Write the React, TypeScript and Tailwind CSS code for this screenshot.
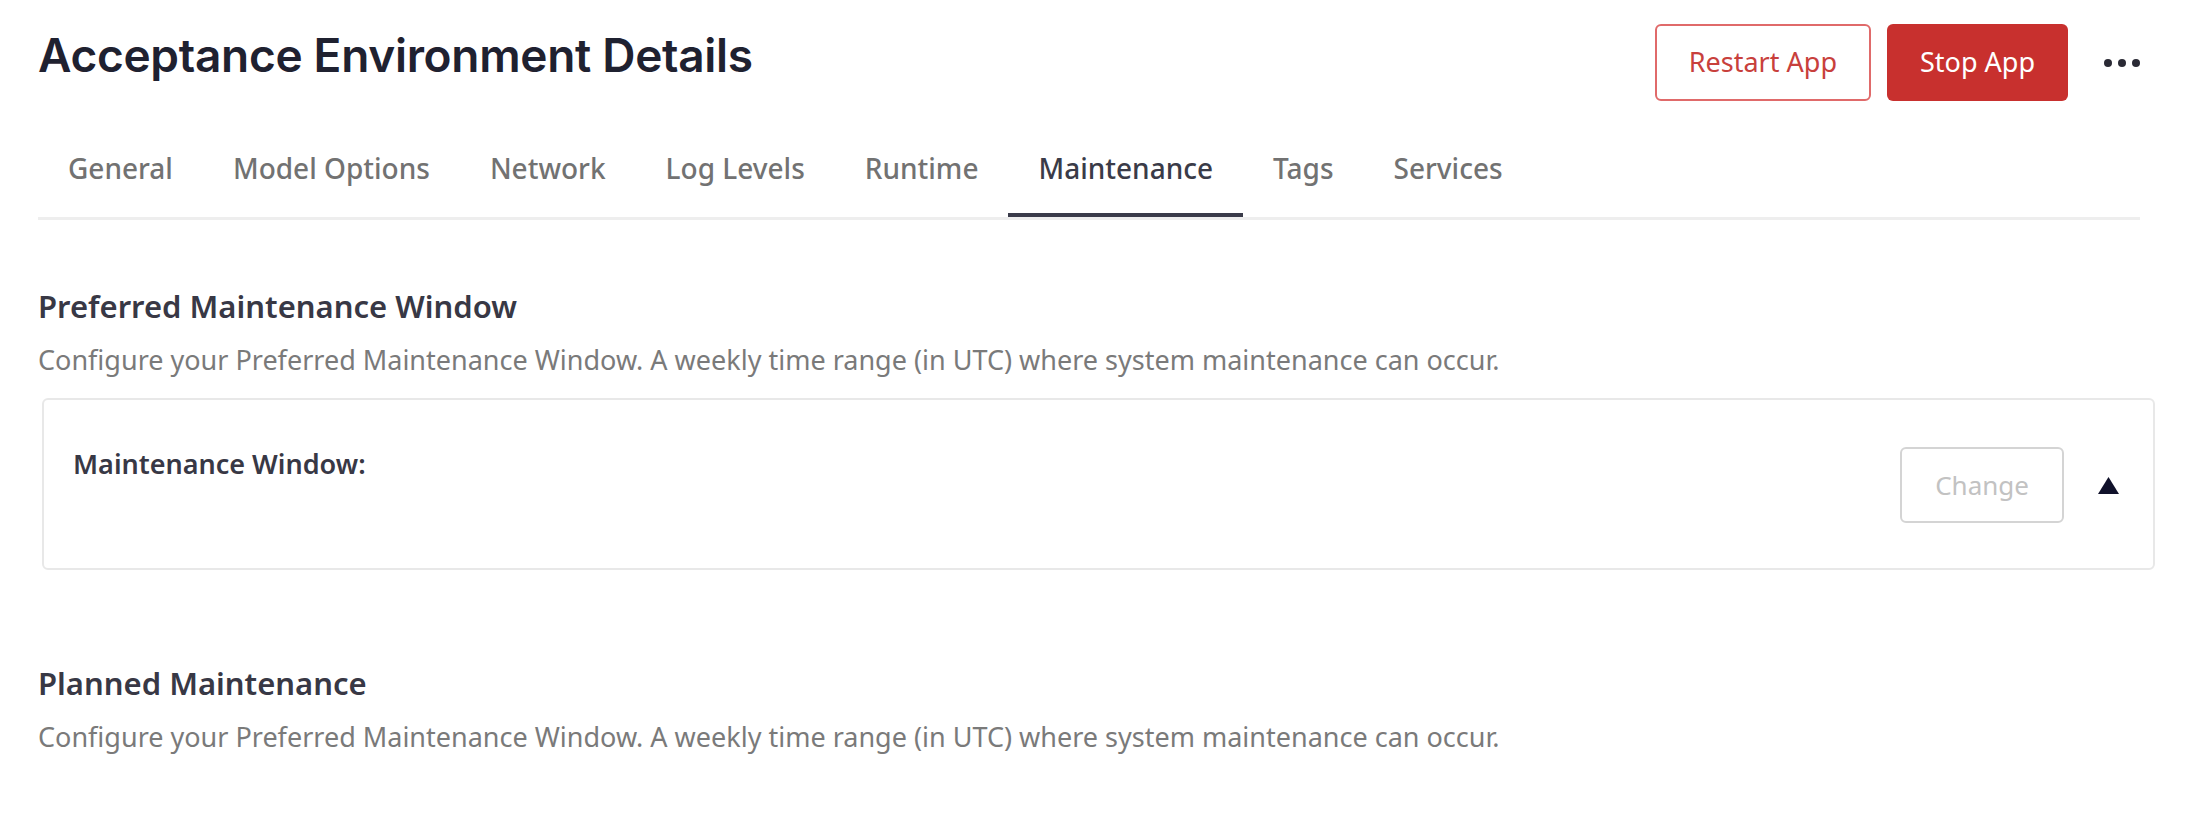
const tabs = [
  "General",
  "Model Options",
  "Network",
  "Log Levels",
  "Runtime",
  "Maintenance",
  "Tags",
  "Services",
];

const description =
  "Configure your Preferred Maintenance Window. A weekly time range (in UTC) where system maintenance can occur.";

export default function App() {
  const active = "Maintenance";

  return (
    <div className="min-h-screen bg-white pl-[38px] pr-[54px] pt-[24px] font-['Noto_Sans',sans-serif]">
      <div className="mr-[15px]">
        <header className="flex items-start justify-between">
          <h1 className="pt-[3px] font-['Inter',sans-serif] text-[46px] leading-[56px] font-semibold tracking-[-0.3px] text-[#1f2130]">
            Acceptance Environment Details
          </h1>
          <div className="flex items-center">
            <button className="h-[77px] rounded-[6px] border-2 border-[#e06a6a] bg-white px-[32px] text-[27px] text-[#c8403c]">
              Restart App
            </button>
            <button className="ml-[16px] h-[77px] rounded-[6px] bg-[#c8302e] px-[33px] text-[27px] text-white">
              Stop App
            </button>
            <button className="ml-[36px] flex items-center gap-[6px]" aria-label="More">
              <span className="h-[8px] w-[8px] rounded-full bg-[#2a2a35]" />
              <span className="h-[8px] w-[8px] rounded-full bg-[#2a2a35]" />
              <span className="h-[8px] w-[8px] rounded-full bg-[#2a2a35]" />
            </button>
          </div>
        </header>

        <nav className="mt-[33px] flex border-b-[3px] border-[#eeeeee]">
          {tabs.map((t) => (
            <button
              key={t}
              className={
                t === active
                  ? "border-b-4 border-[#3a3b4a] px-[30px] pt-[16px] pb-[27px] text-[28px] leading-[36px] font-medium text-[#3a3b48]"
                  : "border-b-4 border-transparent px-[30px] pt-[16px] pb-[27px] text-[28px] leading-[36px] font-medium text-[#727272]"
              }
            >
              {t}
            </button>
          ))}
        </nav>
      </div>

      <section className="mt-[67px]">
        <h2 className="text-[31px] leading-[38px] font-semibold text-[#383845]">
          Preferred Maintenance Window
        </h2>
        <p className="mt-[17px] text-[27px] leading-[36px] text-[#7a7a7a]">
          {description}
        </p>

        <div className="mt-[20px] ml-[4px] flex items-start justify-between rounded-[6px] border-2 border-[#e8e8e8] pt-[47px] pb-[45px] pl-[29px] pr-[34px]">
          <div className="text-[27px] leading-[34px] font-semibold text-[#383845]">
            Maintenance Window:
          </div>
          <div className="flex items-center gap-[34px]">
            <button
              disabled
              className="h-[76px] rounded-[6px] border-2 border-[#d4d4d4] bg-white px-[33px] text-[26px] text-[#c2c2c2]"
            >
              Change
            </button>
            <svg width="21" height="17" viewBox="0 0 21 17" aria-hidden="true">
              <path d="M10.5 0 L21 17 L0 17 Z" fill="#10112a" />
            </svg>
          </div>
        </div>
      </section>

      <section className="mt-[94px]">
        <h2 className="text-[31px] leading-[38px] font-semibold text-[#383845]">
          Planned Maintenance
        </h2>
        <p className="mt-[17px] text-[27px] leading-[36px] text-[#7a7a7a]">
          {description}
        </p>
      </section>
    </div>
  );
}
